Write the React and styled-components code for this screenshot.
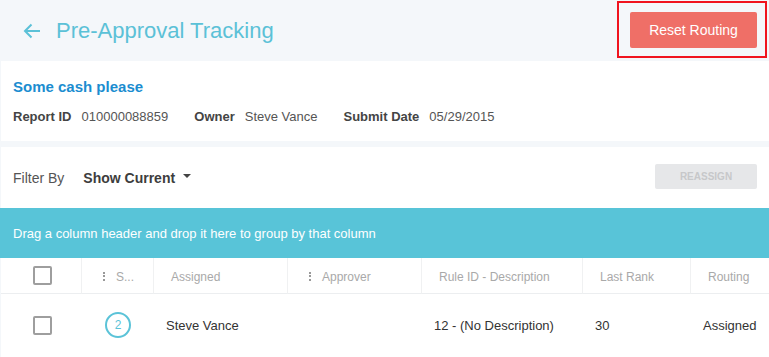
import styled, { createGlobalStyle } from "styled-components";

const GlobalStyle = createGlobalStyle`
  body {
    margin: 0;
    background: #f4f7fa;
    font-family: "Liberation Sans", Arial, sans-serif;
  }
`;

const Page = styled.div`
  width: 769px;
  overflow: hidden;
`;

const TopBar = styled.header`
  height: 61px;
  display: flex;
  align-items: center;
  justify-content: space-between;
  padding: 0 2px 0 23px;
  box-sizing: border-box;
`;

const TitleGroup = styled.div`
  display: flex;
  align-items: center;
  gap: 15px;
  color: #5bc1d7;
`;

const Title = styled.h1`
  margin: 0;
  font-size: 22px;
  font-weight: normal;
  color: #5bc1d7;
`;

const Highlight = styled.div`
  border: 2px solid #f0141e;
  padding: 9px 8px 8px 11px;
  margin-top: -2px;
`;

const DangerButton = styled.button`
  width: 127px;
  height: 36px;
  border: none;
  border-radius: 2px;
  background: #ef6f67;
  color: #fff;
  font-family: inherit;
  font-size: 14px;
  display: block;
`;

const Card = styled.section`
  background: #fff;
  margin-left: 1px;
  margin-bottom: ${(p) => p.$gap || 0}px;
`;

const InfoCard = styled(Card)`
  height: 80px;
  box-sizing: border-box;
  padding: 17px 12px 0;
`;

const ReportName = styled.h2`
  margin: 0 0 13px;
  font-size: 15px;
  font-weight: bold;
  color: #1b8dd0;
  line-height: 18px;
`;

const MetaRow = styled.div`
  display: flex;
  gap: 26px;
  font-size: 13px;
  line-height: 16px;
`;

const Meta = styled.div`
  display: flex;
  gap: 10px;
  color: #555;
  b {
    color: #444;
  }
`;

const FilterBar = styled(Card)`
  height: 61px;
  display: flex;
  align-items: center;
  padding: 0 12px 0 12px;
  font-size: 14px;
  color: #555;
`;

const FilterLabel = styled.span`
  margin-right: 19px;
`;

const Dropdown = styled.span`
  display: flex;
  align-items: center;
  gap: 8px;
  font-weight: bold;
  color: #3d3d3d;
  &::after {
    content: "";
    border-left: 4.5px solid transparent;
    border-right: 4.5px solid transparent;
    border-top: 4.5px solid #444;
    margin-top: -4px;
  }
`;

const MutedButton = styled.button`
  margin-left: auto;
  width: 102px;
  height: 25px;
  border: none;
  border-radius: 2px;
  background: #e6e7e9;
  color: #c7c8ca;
  font-family: inherit;
  font-size: 10px;
  font-weight: bold;
  margin-top: -2px;
`;

const GroupBar = styled.div`
  height: 50px;
  background: #58c4d8;
  color: #fff;
  font-size: 13px;
  display: flex;
  align-items: center;
  padding-left: 13px;
`;

const Grid = styled.div`
  background: #fff;
  margin-left: 1px;
  display: grid;
  grid-template-columns: 80px 72px 134px 134px 161px 108px 1fr;
`;

const HeadCell = styled.div`
  height: 36px;
  box-sizing: border-box;
  padding-top: ${(p) => (p.$center ? 0 : 3)}px;
  border-bottom: 1px solid #eceef0;
  border-left: ${(p) => (p.$first ? "none" : "1px solid #f0f1f2")};
  display: flex;
  align-items: center;
  justify-content: ${(p) => (p.$center ? "center" : "flex-start")};
  padding-left: ${(p) => (p.$center ? 0 : 17)}px;
  font-size: 12px;
  color: #a9a9a9;
  white-space: nowrap;
  overflow: hidden;
`;

const Cell = styled.div`
  height: 62px;
  margin-bottom: 10px;
  display: flex;
  align-items: center;
  justify-content: ${(p) => (p.$center ? "center" : "flex-start")};
  padding-left: ${(p) => (p.$center ? 0 : 13)}px;
  font-size: 13px;
  color: #333;
  white-space: nowrap;
`;

const Checkbox = styled.span`
  width: 15px;
  height: 15px;
  border: 2px solid #9e9e9e;
  border-radius: 2px;
  margin-left: 2px;
`;

const Handle = styled.span`
  display: inline-flex;
  flex-direction: column;
  gap: 1.5px;
  margin: 0 11px 2px 4px;
  i {
    width: 2px;
    height: 2px;
    background: #999;
  }
`;

const Badge = styled.span`
  width: 22px;
  height: 22px;
  border: 2px solid #5bc3d8;
  border-radius: 50%;
  color: #5bc3d8;
  font-size: 12px;
  display: flex;
  align-items: center;
  justify-content: center;
  margin-left: 2px;
`;

function BackArrow() {
  return (
    <svg width="18" height="16" viewBox="0 0 18 16" fill="none" stroke="currentColor" strokeWidth="2">
      <path d="M17 8H2M8.5 1.5L2 8l6.5 6.5" />
    </svg>
  );
}

function Dots() {
  return (
    <Handle>
      <i />
      <i />
      <i />
    </Handle>
  );
}

// the status column is too narrow for its title; the grid shows it shortened
const columns = [
  { key: "check" },
  { key: "status", label: "S...", dots: true },
  { key: "assigned", label: "Assigned" },
  { key: "approver", label: "Approver", dots: true },
  { key: "rule", label: "Rule ID - Description" },
  { key: "rank", label: "Last Rank" },
  { key: "routing", label: "Routing" },
];

const row = {
  step: 2,
  assigned: "Steve Vance",
  approver: "",
  rule: "12 - (No Description)",
  rank: "30",
  routing: "Assigned",
};

export default function App() {
  return (
    <Page>
      <GlobalStyle />
      <TopBar>
        <TitleGroup>
          <BackArrow />
          <Title>Pre-Approval Tracking</Title>
        </TitleGroup>
        <Highlight>
          <DangerButton>Reset Routing</DangerButton>
        </Highlight>
      </TopBar>

      <InfoCard $gap={6}>
        <ReportName>Some cash please</ReportName>
        <MetaRow>
          <Meta>
            <b>Report ID</b>
            <span>010000088859</span>
          </Meta>
          <Meta>
            <b>Owner</b>
            <span>Steve Vance</span>
          </Meta>
          <Meta>
            <b>Submit Date</b>
            <span>05/29/2015</span>
          </Meta>
        </MetaRow>
      </InfoCard>

      <FilterBar>
        <FilterLabel>Filter By</FilterLabel>
        <Dropdown>Show Current</Dropdown>
        <MutedButton>REASSIGN</MutedButton>
      </FilterBar>

      <GroupBar>Drag a column header and drop it here to group by that column</GroupBar>

      <Grid>
        {columns.map((c, i) =>
          c.key === "check" ? (
            <HeadCell key={c.key} $first $center>
              <Checkbox />
            </HeadCell>
          ) : (
            <HeadCell key={c.key} $first={i === 0}>
              {c.dots && <Dots />}
              {c.label}
            </HeadCell>
          )
        )}
        <Cell $center>
          <Checkbox />
        </Cell>
        <Cell $center>
          <Badge>{row.step}</Badge>
        </Cell>
        <Cell>{row.assigned}</Cell>
        <Cell>{row.approver}</Cell>
        <Cell>{row.rule}</Cell>
        <Cell>{row.rank}</Cell>
        <Cell>{row.routing}</Cell>
      </Grid>
    </Page>
  );
}
